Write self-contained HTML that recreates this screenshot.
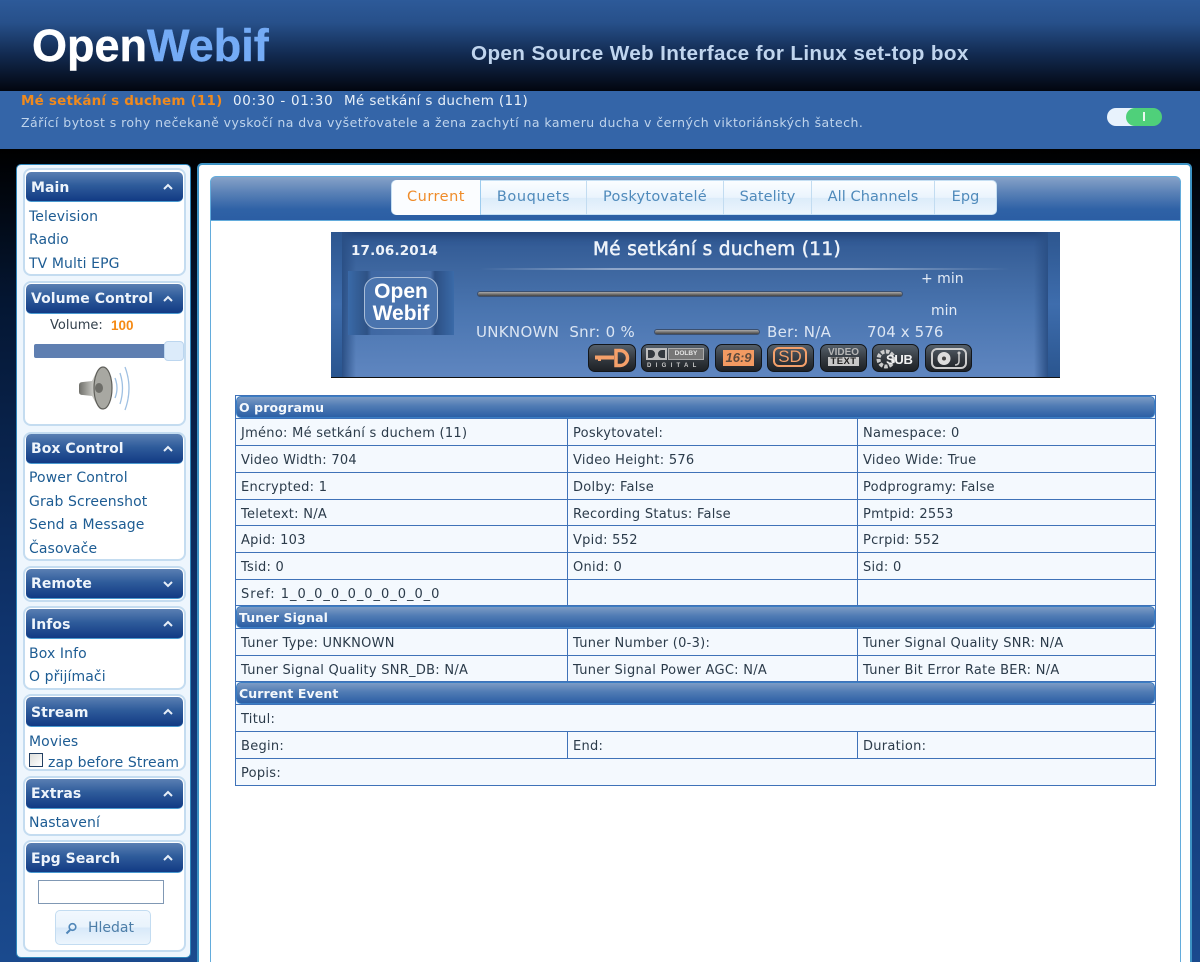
<!DOCTYPE html>
<html><head><meta charset="utf-8"><title>OpenWebif</title>
<style>
*{box-sizing:border-box}
html,body{margin:0;padding:0;width:1200px;height:962px;overflow:hidden}
body{position:relative;font-family:"DejaVu Sans","Liberation Sans",sans-serif;font-size:13px;background:linear-gradient(#000 150px,#041632 300px,#0f336c 620px,#1a4a8e 962px)}
.a{position:absolute;white-space:nowrap}
#top{left:0;top:0;width:1200px;height:91px;background:linear-gradient(#2d5a99 0,#27508a 25%,#122a50 60%,#02060f 100%)}
#bar{left:0;top:91px;width:1200px;height:58px;background:#3465a8}
#side{left:16px;top:164px;width:175px;height:794px;background:#eef6fd;border:1px solid #2f86ba;border-radius:5px}
.box{position:absolute;left:23px;width:163px;background:#fff;border:2px solid #c4dcf0;border-radius:8px}
.hd{position:absolute;left:26px;width:157px;height:30px;border-radius:5px;background:linear-gradient(#5a7fb3 0,#2f5c9b 45%,#123a84 100%);border-bottom:1px solid #4a9ad0;color:#eef4fb;font:bold 14px "DejaVu Sans",sans-serif;line-height:30px;padding-left:5px;letter-spacing:.05px}
.hd.d{line-height:32px}
.hd svg{position:absolute;left:135px;top:10px}
.l{position:absolute;left:29px;color:#1d5c93;font-size:14px;line-height:16px;margin-top:1px;white-space:nowrap;letter-spacing:.1px}
#main{left:197px;top:163px;width:995px;height:810px;background:#fff;border:2px solid #3d93c4;border-radius:5px}
#tabs{left:210px;top:176px;width:971px;height:45px;border:1px solid #63acdc;border-radius:6px 6px 0 0;background:linear-gradient(#86a2c8 0,#5b82b7 35%,#2f62a6 75%,#2b5ea4 100%)}
#tabsl{left:210px;top:220px;width:1px;height:742px;background:#63acdc}
#tabsr{left:1180px;top:220px;width:1px;height:742px;background:#63acdc}
#tabw{left:391px;top:180px;width:606px;height:35px;background:linear-gradient(#fbfdff 0,#eaf4fd 50%,#dcecfa 52%,#ecf5fd 100%);border:1px solid #c5dff3;border-radius:5px}
.tab{position:absolute;top:180px;height:35px;line-height:35px;font-size:14.5px;text-align:center;color:#4f8abb;border-right:1px solid #c2dcf1;letter-spacing:.1px}
#info{left:331px;top:232px;width:729px;height:146px;background:linear-gradient(#2f5792 0,#3d669f 25%,#4a75b0 55%,#5f86c0 100%);border-bottom:1px solid #111;box-shadow:inset 0 6px 10px -4px #1c3a6b}
.ed{position:absolute;top:0;width:11px;height:145px;background:linear-gradient(#2d568f,#3e6dad 50%,#2a558f)}
.sh{position:absolute;top:0;width:14px;height:145px}
.t{color:#eef3fa}
.bar{position:absolute;height:6px;background:linear-gradient(#aaa,#777 50%,#444);border-radius:3px;border:1px solid #3a4f6f}
.in{font-size:15px;line-height:18px;color:#dbe5f3;letter-spacing:.3px}
.ib{position:absolute;top:344px;height:28px;background:linear-gradient(#55606b,#33383e 55%,#1d2126);border:1px solid #12161b;border-radius:7px;overflow:hidden}
table{position:absolute;left:235px;top:395px;width:920px;border-collapse:collapse;table-layout:fixed;font-size:13px;color:#2b3b4a;background:#f4f9fe;letter-spacing:.27px}
td{border:1px solid #3f72b8;padding:3px 0 0 5px;white-space:nowrap;overflow:hidden;height:27px}
tr.s td{height:26px}
th{height:23px;padding:0;text-align:left;border:1px solid #3f72b8;background:#f4f9fe}
th div{height:22px;padding-left:2px;font:bold 12.5px/22px "DejaVu Sans",sans-serif;color:#f4f8fc;border:1px solid #3a7ec4;border-radius:5px;background:linear-gradient(#7d9bc5 0,#507bb4 45%,#2c5fa5 100%);letter-spacing:.1px}
</style></head><body>
<div class="a" id="top"></div>
<div class="a" style="left:32px;top:18px;font:bold 45px/56px 'Liberation Sans',sans-serif;color:#fff;-webkit-text-stroke:.4px currentColor">Open<span style="color:#74abf5">Webif</span></div>
<div class="a" style="left:471px;top:40px;font:bold 20.7px/28px 'Liberation Sans',sans-serif;color:#c0d5ee;letter-spacing:.35px">Open Source Web Interface for Linux set-top box</div>
<div class="a" id="bar"></div>
<div class="a" style="left:21px;top:93px;font-size:13.5px;line-height:17px;letter-spacing:.2px;color:#f08a1d;font-weight:bold">Mé setkání s duchem (11)</div>
<div class="a" style="left:233px;top:93px;font-size:13.5px;line-height:17px;letter-spacing:.7px;color:#e8f0f9">00:30 - 01:30</div>
<div class="a" style="left:344px;top:93px;font-size:13.5px;line-height:17px;letter-spacing:.37px;color:#e8f0f9">Mé setkání s duchem (11)</div>
<div class="a" style="left:21px;top:114px;font-size:12.5px;line-height:17px;color:#bfd4ec;letter-spacing:.45px">Zářící bytost s rohy nečekaně vyskočí na dva vyšetřovatele a žena zachytí na kameru ducha v černých viktoriánských šatech.</div>
<div class="a" style="left:1107px;top:108px;width:40px;height:18px;border-radius:9px;background:#e8f2fc"></div>
<div class="a" style="left:1126px;top:108px;width:36px;height:18px;border-radius:9px;background:#4fd07a"></div>
<div class="a" style="left:1143px;top:112px;width:2px;height:9px;background:#e8f8ee"></div>

<div class="a" id="side"></div>
<div class="box" style="top:168px;height:108px"></div>
<div class="box" style="top:281px;height:145px"></div>
<div class="box" style="top:432px;height:129px"></div>
<div class="box" style="top:566px;height:36px"></div>
<div class="box" style="top:606px;height:84px"></div>
<div class="box" style="top:694px;height:77px"></div>
<div class="box" style="top:776px;height:60px"></div>
<div class="box" style="top:840px;height:112px"></div>

<div class="hd d" style="top:172px">Main<svg width="14" height="10"><path d="M3 7L7 3L11 7" fill="none" stroke="#e6eef8" stroke-width="2"/></svg></div>
<div class="hd" style="top:284px">Volume Control<svg width="14" height="10"><path d="M3 7L7 3L11 7" fill="none" stroke="#e6eef8" stroke-width="2"/></svg></div>
<div class="hd" style="top:434px">Box Control<svg width="14" height="10"><path d="M3 7L7 3L11 7" fill="none" stroke="#e6eef8" stroke-width="2"/></svg></div>
<div class="hd" style="top:569px">Remote<svg width="14" height="10"><path d="M3 3L7 7L11 3" fill="none" stroke="#e6eef8" stroke-width="2"/></svg></div>
<div class="hd d" style="top:609px">Infos<svg width="14" height="10"><path d="M3 7L7 3L11 7" fill="none" stroke="#e6eef8" stroke-width="2"/></svg></div>
<div class="hd d" style="top:697px">Stream<svg width="14" height="10"><path d="M3 7L7 3L11 7" fill="none" stroke="#e6eef8" stroke-width="2"/></svg></div>
<div class="hd" style="top:779px">Extras<svg width="14" height="10"><path d="M3 7L7 3L11 7" fill="none" stroke="#e6eef8" stroke-width="2"/></svg></div>
<div class="hd d" style="top:843px">Epg Search<svg width="14" height="10"><path d="M3 7L7 3L11 7" fill="none" stroke="#e6eef8" stroke-width="2"/></svg></div>

<div class="l" style="top:208px">Television</div>
<div class="l" style="top:231px">Radio</div>
<div class="l" style="top:255px">TV Multi EPG</div>
<div class="a" style="left:50px;top:318px;font-size:13px;line-height:16px;color:#33404c">Volume:</div>
<div class="a" style="left:111px;top:318px;font:bold 13.5px/16px 'Liberation Sans',sans-serif;color:#f58a14">100</div>
<div class="a" style="left:34px;top:344px;width:135px;height:14px;background:#5f7fb1;border-radius:2px"></div>
<div class="a" style="left:164px;top:341px;width:20px;height:20px;background:#dcebfa;border:1px solid #bcd6ef;border-radius:4px"></div>
<svg class="a" style="left:76px;top:364px" width="58" height="50" viewBox="0 0 58 50">
<defs><linearGradient id="sp" x1="0" x2="1"><stop offset="0" stop-color="#6f6f6a"/><stop offset=".5" stop-color="#c9c9c4"/><stop offset="1" stop-color="#77776f"/></linearGradient></defs>
<path d="M3 21Q3 18 7 18L16 17L21 7Q24 2 28 3Q36 24 28 45Q24 47 21 41L16 32L7 31Q3 31 3 28Z" fill="url(#sp)"/>
<ellipse cx="27" cy="24" rx="9" ry="21" fill="#a8a8a2" stroke="#5f5f5a" stroke-width="1.200"/>
<ellipse cx="23" cy="24" rx="4" ry="5" fill="#6d6d68"/>
<path d="M39 14Q43 24 39 34M44 9Q49 24 44 40M49 3Q57 24 49 46" fill="none" stroke="#9fc0e2" stroke-width="1.300"/></svg>
<div class="l" style="top:469px">Power Control</div>
<div class="l" style="top:493px">Grab Screenshot</div>
<div class="l" style="top:516px">Send a Message</div>
<div class="l" style="top:540px">Časovače</div>
<div class="l" style="top:645px">Box Info</div>
<div class="l" style="top:668px">O přijímači</div>
<div class="l" style="top:733px">Movies</div>
<div class="a" style="left:29px;top:753px;width:14px;height:14px;background:linear-gradient(135deg,#dedfdc,#fff);border:1px solid #223f63"></div>
<div class="l" style="left:48px;top:754px">zap before Stream</div>
<div class="l" style="top:814px">Nastavení</div>
<div class="a" style="left:38px;top:880px;width:126px;height:24px;background:#fff;border:1px solid #8098b4"></div>
<div class="a" style="left:55px;top:910px;width:96px;height:35px;border:1px solid #c3dcf1;border-radius:5px;background:linear-gradient(#f2f8fe 0,#e9f3fc 48%,#d8e9f9 52%,#ecf5fd 100%);color:#4d7ea8;font-size:14px;line-height:35px;padding-left:32px">Hledat</div>
<svg class="a" style="left:65px;top:922px" width="13" height="13"><circle cx="7.5" cy="5" r="3.3" fill="none" stroke="#4f86b8" stroke-width="1.6"/><path d="M5 8L1.5 11.5" stroke="#4f86b8" stroke-width="2"/></svg>

<div class="a" id="main"></div>
<div class="a" id="tabs"></div><div class="a" id="tabsl"></div><div class="a" id="tabsr"></div>
<div class="a" id="tabw"></div>
<div class="tab" style="left:392px;width:89px;background:#fbfdff;color:#ef8c2a;border-right:1px solid #9ccbee;border-radius:5px 0 0 5px;letter-spacing:.5px">Current</div>
<div class="tab" style="left:481px;width:106px;letter-spacing:.6px">Bouquets</div>
<div class="tab" style="left:587px;width:137px;letter-spacing:.25px">Poskytovatelé</div>
<div class="tab" style="left:724px;width:88px">Satelity</div>
<div class="tab" style="left:812px;width:123px">All Channels</div>
<div class="tab" style="left:935px;width:61px;border-right:0">Epg</div>

<div class="a" id="info"><div class="ed" style="left:0"></div><div class="ed" style="left:717px;width:12px"></div>
<div class="sh" style="left:11px;background:linear-gradient(90deg,#2a4f85,transparent)"></div><div class="sh" style="left:703px;background:linear-gradient(270deg,#2a4f85,transparent)"></div></div>
<div class="a" style="left:351px;top:243px;font:bold 13.5px/17px 'DejaVu Sans',sans-serif;color:#eef3fa;letter-spacing:.15px">17.06.2014</div>
<div class="a t" style="left:593px;top:238px;font-size:18.5px;line-height:23px;letter-spacing:.33px;-webkit-text-stroke:.5px #eef3fa">Mé setkání s duchem (11)</div>
<div class="a" style="left:480px;top:268px;width:530px;height:2px;background:linear-gradient(90deg,transparent,#8ea6c9 25%,#8ea6c9 70%,transparent)"></div>
<div class="a" style="left:348px;top:271px;width:106px;height:64px;background:linear-gradient(90deg,#3a6aa8,#2e5285 18%,#3f68a3 22%,#486fa9 78%,#2c4f83 82%,#3a6aa8)"></div>
<div class="a" style="left:364px;top:277px;width:74px;height:52px;border:1px solid #a9bdd8;border-radius:13px;background:#4a74ae;color:#fff;font:bold 21px/22px 'Liberation Sans',sans-serif;text-align:center;padding-top:3px">Open<br>Webif</div>
<div class="bar" style="left:477px;top:291px;width:426px"></div>
<div class="a t" style="left:921px;top:270px;font-size:14px;line-height:18px;color:#e3ebf6">+ min</div>
<div class="a t" style="left:931px;top:302px;font-size:14px;line-height:18px;color:#e3ebf6">min</div>
<div class="a in" style="left:476px;top:323px">UNKNOWN&nbsp; Snr: 0 %</div>
<div class="bar" style="left:654px;top:329px;width:106px"></div>
<div class="a in" style="left:767px;top:323px">Ber: N/A</div>
<div class="a in" style="left:867px;top:323px;letter-spacing:.1px">704 x 576</div>

<div class="ib" style="left:588px;width:48px"><svg width="46" height="26"><path d="M27 5.500H31A7.500 7.500 0 0 1 31 20.500H27Z" fill="none" stroke="#f4a06a" stroke-width="3.500"/><path d="M6 10.500H25V14.500H12V16H9V14.500H6Z" fill="#f4a06a"/></svg></div>
<div class="ib" style="left:641px;width:68px;color:#c8c8c8;font:bold 7px/9px 'Liberation Sans',sans-serif"><svg class="a" style="left:4px;top:3px" width="22" height="13"><rect width="21" height="12" fill="#bdbdbd"/><path d="M2 2H5A4 4 0 0 1 5 10H2ZM19 2H16A4 4 0 0 0 16 10H19Z" fill="#33383e"/></svg><div class="a" style="left:26px;top:3px;width:36px;height:12px;border:1px solid #aaa;background:#777;text-align:center;line-height:10px;font-size:6.500px;color:#e4e4e4">DOLBY</div><div class="a" style="left:5px;top:17px;letter-spacing:4.300px;font-size:6px;line-height:8px">DIGITAL</div></div>
<div class="ib" style="left:715px;width:47px"><div class="a" style="left:7px;top:5px;width:31px;height:16px;background:#f39a62;color:#5f4a3c;font:italic bold 13px/16px 'Liberation Sans',sans-serif;text-align:center">16:9</div></div>
<div class="ib" style="left:767px;width:47px"><div class="a" style="left:5px;top:2px;width:34px;height:20px;border:2px solid #f4a06a;border-radius:6px;color:#f4a06a;font:17px/16px 'Liberation Sans',sans-serif;text-align:center">SD</div></div>
<div class="ib" style="left:820px;width:47px;color:#e0e0e0;font:bold 10px/9px 'Liberation Sans',sans-serif;text-align:center"><div style="margin-top:3px;color:#b5b5b5">VIDEO</div><div style="background:#c8c8c8;color:#222;margin:0 7px;font-size:9.500px;line-height:9px;letter-spacing:.4px">TEXT</div></div>
<div class="ib" style="left:872px;width:47px"><svg class="a" style="left:2px;top:3px" width="22" height="22"><circle cx="11" cy="11" r="7.500" fill="none" stroke="#ccc" stroke-width="4" stroke-dasharray="3.500 1.500"/></svg><div class="a" style="left:13px;top:7px;font:bold 13px/16px 'Liberation Sans',sans-serif;color:#f2f2f2;letter-spacing:-.3px">SUB</div></div>
<div class="ib" style="left:925px;width:47px"><svg width="45" height="26"><rect x="6" y="4" width="34" height="19" rx="5" fill="none" stroke="#ccc" stroke-width="2"/><circle cx="18" cy="13.500" r="6.500" fill="#ddd"/><circle cx="18" cy="13.500" r="2" fill="#444"/><circle cx="33" cy="8" r="1.500" fill="#ccc"/><path d="M33 9V16Q33 20 29 20" fill="none" stroke="#ccc" stroke-width="1.500"/></svg></div>

<table>
<colgroup><col style="width:332px"><col style="width:290px"><col style="width:298px"></colgroup>
<tr><th colspan="3"><div>O programu</div></th></tr>
<tr><td>Jméno: Mé setkání s duchem (11)</td><td>Poskytovatel:</td><td>Namespace: 0</td></tr>
<tr><td>Video Width: 704</td><td>Video Height: 576</td><td>Video Wide: True</td></tr>
<tr><td>Encrypted: 1</td><td>Dolby: False</td><td>Podprogramy: False</td></tr>
<tr class="s"><td>Teletext: N/A</td><td>Recording Status: False</td><td>Pmtpid: 2553</td></tr>
<tr><td>Apid: 103</td><td>Vpid: 552</td><td>Pcrpid: 552</td></tr>
<tr><td>Tsid: 0</td><td>Onid: 0</td><td>Sid: 0</td></tr>
<tr class="s"><td style="letter-spacing:.97px">Sref: 1_0_0_0_0_0_0_0_0_0</td><td></td><td></td></tr>
<tr><th colspan="3"><div>Tuner Signal</div></th></tr>
<tr><td>Tuner Type: UNKNOWN</td><td>Tuner Number (0-3):</td><td>Tuner Signal Quality SNR: N/A</td></tr>
<tr class="s"><td>Tuner Signal Quality SNR_DB: N/A</td><td>Tuner Signal Power AGC: N/A</td><td>Tuner Bit Error Rate BER: N/A</td></tr>
<tr><th colspan="3"><div>Current Event</div></th></tr>
<tr><td colspan="3">Titul:</td></tr>
<tr><td>Begin:</td><td>End:</td><td>Duration:</td></tr>
<tr><td colspan="3">Popis:</td></tr>
</table>
</body></html>
